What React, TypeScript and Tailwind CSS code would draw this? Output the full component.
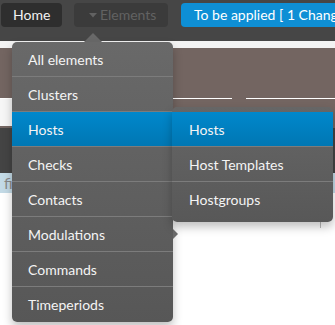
import React from "react";

const mainItems = [
  "All elements",
  "Clusters",
  "Hosts",
  "Checks",
  "Contacts",
  "Modulations",
  "Commands",
  "Timeperiods",
];

const subItems = ["Hosts", "Host Templates", "Hostgroups"];

export default function App() {
  return (
    <div className="relative w-[335px] h-[325px] overflow-hidden bg-white font-['Lato','Noto_Sans',sans-serif] text-[14px]">
      {/* nav bar */}
      <div className="h-[41px] bg-[#464646] flex items-start pt-[3px] pl-[1px] overflow-hidden">
        <div className="shrink-0 w-[61px] h-[24px] rounded-[4px] bg-[#2e2e2e] text-[#f2f2f2] pl-[12px] leading-[24px]">
          Home
        </div>
        <div className="shrink-0 ml-[12px] w-[94px] h-[24px] rounded-[4px] bg-[#3b3b3b] text-[#626262] flex items-center pl-[15px] leading-[24px]">
          <svg width="8" height="5" viewBox="0 0 8 5" className="mr-[3px]">
            <path d="M0 0 L8 0 L4 4.5 Z" fill="#626262" />
          </svg>
          Elements
        </div>
        <div className="shrink-0 ml-[13px] h-[24px] rounded-[4px] bg-[#0e8fd5] text-white px-[13px] leading-[24px] whitespace-nowrap">
          To be applied [ 1 Changes ]
        </div>
      </div>
      {/* page background */}
      <div className="h-[7px] bg-[#f3f3f3]" />
      <div className="h-[80px] bg-[#736561] flex flex-col">
        <div className="h-[50px]" />
        <div className="h-[1px] flex">
          <div className="w-[232px] bg-white" />
          <div className="w-[14px]" />
          <div className="flex-1 bg-white" />
        </div>
        <div className="flex-1 flex">
          <div className="w-[12px] h-[27px] bg-[#f6f6f6]" />
        </div>
      </div>
      <div className="h-[45px] bg-[#444444]" />
      <div className="h-[20px] bg-[#c3dae6] flex items-center pl-[4px] text-[#888] text-[15px]">
        filter
      </div>
      <div className="flex justify-end pr-[14px] pt-[25px]">
        <div className="w-[1px] h-[10px] bg-[#bbbbbb]" />
      </div>

      {/* caret above main menu */}
      <div className="absolute left-[84px] top-[33px] w-0 h-0 border-l-[9px] border-r-[9px] border-b-[9px] border-l-transparent border-r-transparent border-b-[#696969]" />

      {/* main dropdown */}
      <div className="absolute left-[12px] top-[42px] w-[161px] rounded-[5px] overflow-hidden bg-gradient-to-b from-[#696969] to-[#575757] shadow-[0_5px_10px_rgba(0,0,0,0.25)]">
        {mainItems.map((it, i) => (
          <div
            key={it}
            className={
              "h-[35px] pl-[16px] flex items-center text-[#f4f4f4] " +
              (i < mainItems.length - 1 ? "border-b border-[#7c7c7c] " : "") +
              (it === "Hosts" ? "bg-gradient-to-b from-[#0088cc] to-[#0077b3]" : "")
            }
          >
            {it}
          </div>
        ))}
      </div>

      {/* right caret by Modulations */}
      <div className="absolute left-[173px] top-[229px] w-0 h-0 border-t-[5px] border-b-[5px] border-l-[5px] border-t-transparent border-b-transparent border-l-[#6a6a6a]" />

      {/* submenu */}
      <div className="absolute left-[172px] top-[107px] w-[161px] py-[5px] rounded-[5px] bg-gradient-to-b from-[#666666] to-[#585858] shadow-[0_5px_10px_rgba(0,0,0,0.25)]">
        {subItems.map((it, i) => (
          <div
            key={it}
            className={
              "h-[35px] pl-[17px] flex items-center text-[#f4f4f4] " +
              (i < subItems.length - 1 ? "border-b border-[#7c7c7c] " : "") +
              (i === 0 ? "bg-gradient-to-b from-[#0088cc] to-[#0077b3]" : "")
            }
          >
            {it}
          </div>
        ))}
      </div>
    </div>
  );
}
